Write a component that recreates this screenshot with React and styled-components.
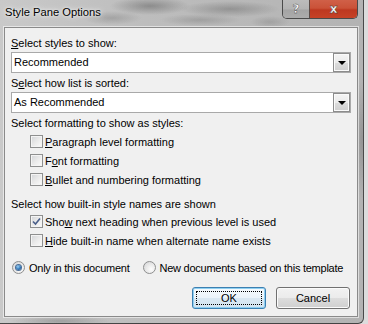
import React from 'react';
import styled, { createGlobalStyle } from 'styled-components';

const GlobalStyle = createGlobalStyle`
  html, body {
    margin: 0;
    padding: 0;
    background: #dcdcdc;
  }
  body {
    font-family: "Liberation Sans", Arial, sans-serif;
    font-size: 11px;
    color: #000;
  }
`;

const Window = styled.div`
  width: 363px;
  height: 323px;
  border-right: 1px solid rgba(30, 30, 30, 0.75);
  border-bottom: 1px solid rgba(30, 30, 30, 0.75);
  border-radius: 0 0 6px 0;
  display: flex;
  flex-direction: column;
  background:
    radial-gradient(ellipse 40px 9px at 150px 6px, rgba(80, 80, 80, 0.45), transparent),
    radial-gradient(ellipse 50px 8px at 230px 9px, rgba(90, 90, 90, 0.4), transparent),
    radial-gradient(ellipse 30px 7px at 112px 18px, rgba(110, 110, 110, 0.35), transparent),
    radial-gradient(ellipse 40px 6px at 200px 20px, rgba(110, 110, 110, 0.35), transparent),
    radial-gradient(ellipse 20px 6px at 270px 22px, rgba(110, 110, 110, 0.3), transparent),
    radial-gradient(ellipse 8px 60px at 362px 140px, rgba(90, 90, 90, 0.35), transparent),
    radial-gradient(ellipse 50px 5px at 60px 321px, rgba(90, 90, 90, 0.35), transparent),
    linear-gradient(90deg, #c9c9c9 0%, #bdbdbd 40%, #b3b3b3 100%);
`;

const TitleBar = styled.div`
  height: 27px;
  display: flex;
  align-items: flex-start;
  flex-shrink: 0;
`;

const Title = styled.div`
  padding: 5px 0 0 5px;
  font-size: 11.2px;
  line-height: 15px;
  color: #000;
  text-shadow: 0 0 6px rgba(255, 255, 255, 0.9), 0 0 3px rgba(255, 255, 255, 0.8);
`;

const CaptionButtons = styled.div`
  margin-left: auto;
  margin-right: 5px;
  display: flex;
  height: 18px;
  border: 1px solid #4a4a4a;
  border-top: none;
  border-radius: 0 0 5px 5px;
  overflow: hidden;
`;

const HelpButton = styled.div`
  width: 26px;
  height: 18px;
  display: flex;
  align-items: center;
  justify-content: center;
  background: linear-gradient(#bcbcbc 0%, #b3b3b3 50%, #a4a4a4 55%, #acacac 100%);
`;

const CloseButton = styled.div`
  width: 47px;
  height: 18px;
  display: flex;
  align-items: center;
  justify-content: center;
  border-left: 1px solid #5a4a46;
  background: linear-gradient(#d06048 0%, #ca5238 45%, #bd3820 55%, #c64226 100%);
`;

const Glyph = styled.span`
  font-family: "DejaVu Sans", sans-serif;
  font-weight: bold;
  font-size: 12px;
  line-height: 12px;
  color: #fff;
  -webkit-text-stroke: 0.4px #333;
`;

const Client = styled.div`
  margin: 0 5px 6px 4px;
  flex: 1;
  background: #f0f0f0;
  border: 1px solid #8a8a8a;
  box-shadow: 0 0 0 1px rgba(255, 255, 255, 0.55);
  padding: 8px 6px 0 6px;
  display: flex;
  flex-direction: column;
`;

const Label = styled.div`
  line-height: 15px;
  height: 15px;
  margin-top: ${p => p.$top || 0}px;
  margin-bottom: ${p => p.$bottom || 0}px;
  white-space: nowrap;
`;

const U = styled.span`
  text-decoration: underline;
  text-underline-offset: 1px;
`;

const Text = styled.span`
  white-space: pre;
  letter-spacing: ${p => p.$tight ? '-0.25px' : 'normal'};
`;

const Combo = styled.div`
  width: 340px;
  height: 21px;
  box-sizing: border-box;
  border: 1px solid #a9a9a9;
  background: #fff;
  display: flex;
  align-items: center;
`;

const ComboText = styled.div`
  flex: 1;
  padding-left: 2px;
  line-height: 15px;
`;

const DropButton = styled.div`
  width: 17px;
  height: 19px;
  box-sizing: border-box;
  border: 1px solid #8c8c8c;
  background: linear-gradient(#f4f4f4 0%, #ebebeb 50%, #dcdcdc 51%, #cfcfcf 100%);
  box-shadow: inset 0 0 0 1px #fafafa;
  display: flex;
  align-items: center;
  justify-content: center;
`;

const Arrow = styled.div`
  width: 0;
  height: 0;
  margin-top: 1px;
  border-left: 4px solid transparent;
  border-right: 4px solid transparent;
  border-top: 4px solid #000;
`;

const CheckRow = styled.div`
  height: 19px;
  display: flex;
  align-items: center;
  padding-left: 19px;
  white-space: nowrap;
`;

const CheckBox = styled.div`
  width: 13px;
  height: 13px;
  box-sizing: border-box;
  border: 1px solid #8e8f8f;
  background: linear-gradient(135deg, #d2d4d7 0%, #eaeaea 50%, #fbfbfb 100%);
  box-shadow: inset 0 0 0 1px #f4f4f4;
  margin-right: 2px;
  display: flex;
  align-items: center;
  justify-content: center;
  flex-shrink: 0;
`;

const RadioRow = styled.div`
  height: 19px;
  margin-top: 8px;
  display: flex;
  align-items: center;
  white-space: nowrap;
`;

const RadioItem = styled.div`
  display: flex;
  align-items: center;
  margin-right: ${p => p.$gap || 0}px;
`;

const Radio = styled.div`
  width: 13px;
  height: 13px;
  box-sizing: border-box;
  border-radius: 50%;
  border: 1px solid #8e8f8f;
  background: radial-gradient(circle at 65% 65%, #fdfdfd 0%, #e6e6e6 55%, #cfd1d4 100%);
  margin-left: ${p => p.$left || 0}px;
  margin-right: 4px;
  display: flex;
  align-items: center;
  justify-content: center;
  flex-shrink: 0;
`;

const RadioDot = styled.div`
  width: 5px;
  height: 5px;
  border-radius: 50%;
  background: radial-gradient(circle at 40% 35%, #9ad0f5 0%, #2f76b8 55%, #1b3f70 100%);
  box-shadow: 0 0 0 1px #4b6d96;
`;

const ButtonRow = styled.div`
  width: 339px;
  margin-top: 10px;
  display: flex;
  justify-content: flex-end;
  gap: 10px;
`;

const PushButton = styled.div`
  width: 74px;
  height: 22px;
  box-sizing: border-box;
  border: 1px solid ${p => (p.$default ? '#3c7fb1' : '#707070')};
  border-radius: 3px;
  background: ${p => p.$default
    ? 'linear-gradient(#f6fafd 0%, #ecf4fa 50%, #dbe9f3 51%, #d3e4f0 100%)'
    : 'linear-gradient(#f2f2f2 0%, #ebebeb 50%, #dddddd 51%, #cfcfcf 100%)'};
  box-shadow: inset 0 0 0 1px ${p => (p.$default ? '#8fd0f2' : '#fbfbfb')};
  display: flex;
  align-items: center;
  justify-content: center;
  padding: 3px;
`;

const FocusRect = styled.div`
  flex: 1;
  align-self: stretch;
  border: 1px dotted ${p => (p.$on ? '#000' : 'transparent')};
  display: flex;
  align-items: center;
  justify-content: center;
  line-height: 13px;
`;

function Check({ checked }) {
  return (
    <CheckBox>
      {checked && (
        <svg width="9" height="9" viewBox="0 0 9 9">
          <path d="M1 4.5 L3.5 7 L8 1.5" fill="none" stroke="#4a5f8a" strokeWidth="1.6" />
        </svg>
      )}
    </CheckBox>
  );
}

export default function App() {
  return (
    <>
      <GlobalStyle />
      <Window>
        <TitleBar>
          <Title>Style Pane Options</Title>
          <CaptionButtons>
            <HelpButton><Glyph>?</Glyph></HelpButton>
            <CloseButton><Glyph>x</Glyph></CloseButton>
          </CaptionButtons>
        </TitleBar>
        <Client>
          <Label $bottom={1}><U>S</U>elect styles to show:</Label>
          <Combo>
            <ComboText>Recommended</ComboText>
            <DropButton><Arrow /></DropButton>
          </Combo>
          <Label $top={3} $bottom={1}>S<U>e</U>lect how list is sorted:</Label>
          <Combo>
            <ComboText>As Recommended</ComboText>
            <DropButton><Arrow /></DropButton>
          </Combo>
          <Label $top={3} $bottom={1}>Select formatting to show as styles:</Label>
          <CheckRow><Check /><Text><U>P</U>aragraph level formatting</Text></CheckRow>
          <CheckRow><Check /><Text>F<U>o</U>nt formatting</Text></CheckRow>
          <CheckRow><Check /><Text><U>B</U>ullet and numbering formatting</Text></CheckRow>
          <Label $top={8}>Select how built-in style names are shown</Label>
          <CheckRow><Check checked /><Text>Sho<U>w</U> next heading when previous level is used</Text></CheckRow>
          <CheckRow><Check /><Text><U>H</U>ide built-in name when alternate name exists</Text></CheckRow>
          <RadioRow>
            <RadioItem $gap={13}>
              <Radio $left={1}><RadioDot /></Radio>
              <Text $tight>Only in this document</Text>
            </RadioItem>
            <RadioItem>
              <Radio />
              <Text $tight>New documents based on this template</Text>
            </RadioItem>
          </RadioRow>
          <ButtonRow>
            <PushButton $default><FocusRect $on>OK</FocusRect></PushButton>
            <PushButton><FocusRect>Cancel</FocusRect></PushButton>
          </ButtonRow>
        </Client>
      </Window>
    </>
  );
}
